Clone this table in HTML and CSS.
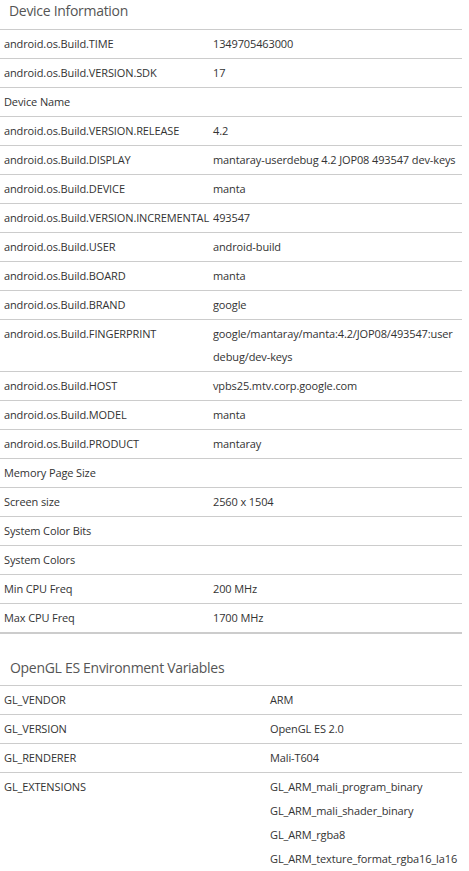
FILE: index.html
```html
<!DOCTYPE html>
<html>
<head>
<meta charset="utf-8">
<link rel="stylesheet" href="styles.css">
</head>
<body>
<section class="sec first">
  <h2 class="title">Device Information</h2>
  <table class="info">
    <tr><td class="k">android.os.Build.TIME</td><td>1349705463000</td></tr>
    <tr><td class="k">android.os.Build.VERSION.SDK</td><td>17</td></tr>
    <tr><td class="k">Device Name</td><td></td></tr>
    <tr><td class="k">android.os.Build.VERSION.RELEASE</td><td>4.2</td></tr>
    <tr><td class="k">android.os.Build.DISPLAY</td><td class="nw">mantaray-userdebug 4.2 JOP08 493547 dev-keys</td></tr>
    <tr><td class="k">android.os.Build.DEVICE</td><td>manta</td></tr>
    <tr><td class="k">android.os.Build.VERSION.INCREMENTAL</td><td>493547</td></tr>
    <tr><td class="k">android.os.Build.USER</td><td>android-build</td></tr>
    <tr><td class="k">android.os.Build.BOARD</td><td>manta</td></tr>
    <tr><td class="k">android.os.Build.BRAND</td><td>google</td></tr>
    <tr><td class="k">android.os.Build.FINGERPRINT</td><td><span class="nw">google/mantaray/manta:4.2/JOP08/493547:user</span><wbr><span class="nw">debug/dev-keys</span></td></tr>
    <tr><td class="k">android.os.Build.HOST</td><td>vpbs25.mtv.corp.google.com</td></tr>
    <tr><td class="k">android.os.Build.MODEL</td><td>manta</td></tr>
    <tr><td class="k">android.os.Build.PRODUCT</td><td>mantaray</td></tr>
    <tr><td class="k">Memory Page Size</td><td></td></tr>
    <tr><td class="k">Screen size</td><td>2560 x 1504</td></tr>
    <tr><td class="k">System Color Bits</td><td></td></tr>
    <tr><td class="k">System Colors</td><td></td></tr>
    <tr><td class="k">Min CPU Freq</td><td>200 MHz</td></tr>
    <tr class="last"><td class="k">Max CPU Freq</td><td>1700 MHz</td></tr>
  </table>
</section>
<section class="sec second">
  <h2 class="title">OpenGL ES Environment Variables</h2>
  <table class="info gl">
    <tr><td class="k">GL_VENDOR</td><td>ARM</td></tr>
    <tr><td class="k">GL_VERSION</td><td>OpenGL ES 2.0</td></tr>
    <tr><td class="k">GL_RENDERER</td><td>Mali-T604</td></tr>
    <tr><td class="k">GL_EXTENSIONS</td><td>
      <div class="ext">GL_ARM_mali_program_binary</div>
      <div class="ext">GL_ARM_mali_shader_binary</div>
      <div class="ext">GL_ARM_rgba8</div>
      <div class="ext">GL_ARM_texture_format_rgba16_la16</div>
    </td></tr>
  </table>
</section>
</body>
</html>
```
FILE: styles.css
```css
html, body {
  margin: 0;
  padding: 0;
  background: #fff;
}
body {
  font-family: "Open Sans", "Noto Sans", sans-serif;
  color: #333;
  width: 462px;
}
.title {
  margin: 1px 0 8px;
  padding: 0 9px;
  font-size: 14px;
  letter-spacing: -0.3px;
  line-height: 20px;
  font-weight: normal;
  color: #555;
}
.second .title {
  margin-top: 24px;
  margin-bottom: 7px;
  padding-left: 10px;
}
.info {
  width: 462px;
  table-layout: fixed;
  border-collapse: collapse;
  border-top: 1px solid #ccc;
  font-size: 11px;
  letter-spacing: -0.12px;
}
.info td {
  padding: 2px 4px 3px;
  line-height: 23px;
  vertical-align: top;
  border-bottom: 1px solid #ccc;
}
.info td.k {
  width: 201px;
  white-space: nowrap;
}
.gl td.k {
  width: 258px;
}
.nw {
  white-space: nowrap;
}
.info tr.last td {
  border-bottom: 2px solid #ccc;
}
.ext {
  line-height: 24px;
}
```
